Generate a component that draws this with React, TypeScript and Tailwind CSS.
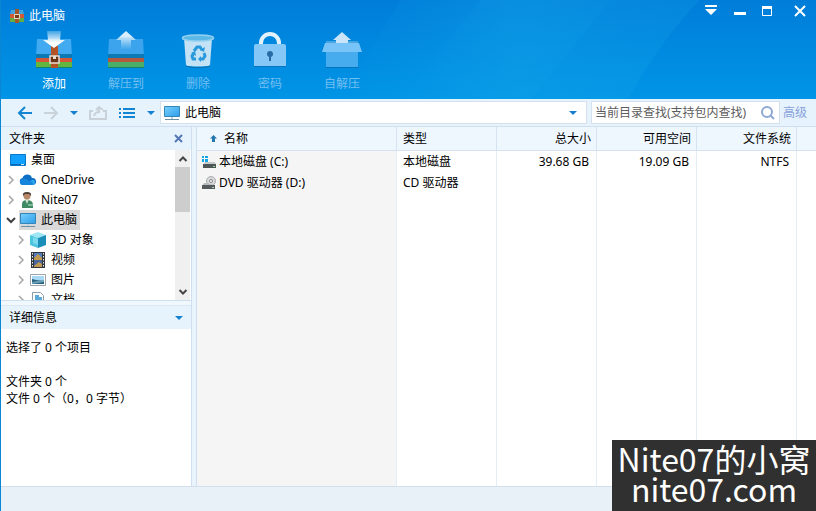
import type { ReactNode } from "react";

const ZipBase = ({ dim = false }: { dim?: boolean }) => (
  <g>
    <path d="M2 9h34l1 18H1z" fill={dim ? "#3ba4ec" : "#41aaf0"} />
    <path d="M1 24h36v5H1z" fill="#0b79b4" />
    <path d="M1 28h36v4H1z" fill={dim ? "#b4583f" : "#d5573a"} />
    <path d="M1 32h36v5H1z" fill={dim ? "#48ae68" : "#62b53f"} />
    <path d="M1 37h36v1H1z" fill="#17836a" />
  </g>
);

const AddIcon = () => (
  <svg width="38" height="40" viewBox="0 0 38 40" aria-hidden="true">
    <defs>
      <linearGradient id="down" x1="0" y1="0" x2="0" y2="1">
        <stop offset="0" stopColor="#fff" stopOpacity="0.25" />
        <stop offset="0.7" stopColor="#fff" />
      </linearGradient>
    </defs>
    <ZipBase />
    <path d="M16 16h7v22h-7z" fill="#b25425" />
    <path d="M12 1h14l-1 9h5L19 18 8 10h5z" fill="url(#down)" />
    <path d="M15 26h9v7h-9z" fill="#6b3414" stroke="#e9ddd3" strokeWidth="1.500" />
    <path d="M18 26h3v3h-3z" fill="#e9ddd3" />
  </svg>
);

const ExtractIcon = () => (
  <svg width="38" height="40" viewBox="0 0 38 40" aria-hidden="true">
    <defs>
      <linearGradient id="up" x1="0" y1="0" x2="0" y2="1">
        <stop offset="0.3" stopColor="#d9edfb" />
        <stop offset="1" stopColor="#9fd2f6" stopOpacity="0.1" />
      </linearGradient>
    </defs>
    <ZipBase dim />
    <path d="M19 1l10 9h-5v9H14v-9H9z" fill="url(#up)" />
  </svg>
);

const DeleteIcon = () => (
  <svg width="38" height="40" viewBox="0 0 38 40" aria-hidden="true">
    <path d="M5 8h28l-2 27c0 2-24 2-24 0z" fill="#c4e2f5" />
    <ellipse cx="19" cy="8" rx="15.500" ry="3" fill="#5ab9e6" stroke="#93d0ef" strokeWidth="1.500" />
    <path d="M7 36c4 2 20 2 24 0" stroke="#0871ad" fill="none" />
    <g fill="none" stroke="#2999dc" strokeWidth="3">
      <path d="M15 21l3-4h3l2 3" />
      <path d="M25 23l1 3-2 3h-3" />
      <path d="M17 29h-3l-1-3 2-3" />
    </g>
    <path d="M21 20l4 2 1-5zM22 26v6l-3-3zM12 23l4-2 1 5z" fill="#2999dc" />
  </svg>
);

const LockIcon = () => (
  <svg width="38" height="40" viewBox="0 0 38 40" aria-hidden="true">
    <path d="M10 16v-3a9 9 0 0 1 18 0v3" fill="none" stroke="#e2f2fc" strokeWidth="4" />
    <path d="M3 16q0-2 2-2h28q2 0 2 2v20H3z" fill="#85c8f7" />
    <path d="M3 36h32v1H3z" fill="#0874bc" />
    <circle cx="19" cy="24" r="3" fill="#276ca5" />
    <path d="M18 25h2v6h-2z" fill="#276ca5" />
  </svg>
);

const SfxIcon = () => (
  <svg width="42" height="40" viewBox="0 0 42 40" aria-hidden="true">
    <path d="M5 11h32v6H5z" fill="#49a5df" />
    <path d="M21 2l9 8h-3v6H15v-6h-3z" fill="#cae5f9" />
    <path d="M5 21h32v16H5z" fill="#47aced" />
    <path d="M4 13h34l3 9H1z" fill="#78c3f7" />
    <path d="M4 37h34v1H4z" fill="#0874bc" />
  </svg>
);

const AppIcon = () => (
  <svg width="16" height="14" viewBox="0 0 16 14" aria-hidden="true">
    <path d="M2 1h12l1 5H1z" fill="#43a5dc" />
    <path d="M1 5h14v4H1z" fill="#d25a36" />
    <path d="M1 9h14v4H1z" fill="#63ab42" />
    <path d="M6 0h4v14H6z" fill="#a1572a" />
    <path d="M5.500 5.500h5v4h-5z" fill="#754019" stroke="#e9d9c4" />
  </svg>
);

const Pc = () => (
  <svg width="18" height="18" viewBox="0 0 18 18" aria-hidden="true">
    <defs>
      <linearGradient id="screen" x1="0" y1="0" x2="1" y2="1">
        <stop offset="0" stopColor="#7bd0fc" />
        <stop offset="1" stopColor="#2c9eea" />
      </linearGradient>
    </defs>
    <path d="M1.500 2.500h15v10h-15z" fill="url(#screen)" stroke="#3585b8" />
    <path d="M8 13h2v2H8z" fill="#b8d5e5" />
    <path d="M2 15.500h14" stroke="#6c8fa5" />
  </svg>
);

const Desktop = () => (
  <svg width="18" height="16" viewBox="0 0 18 16" aria-hidden="true">
    <path d="M1.500 2.500h15v11h-15z" fill="#12a0ff" stroke="#0879c9" />
    <path d="M2 12h14v1H2z" fill="#0868b8" />
    <path d="M12 12h3v1h-3z" fill="#cde9fa" />
  </svg>
);

const Cloud = () => (
  <svg width="18" height="16" viewBox="0 0 18 16" aria-hidden="true">
    <path d="M4 13a3.500 3.500 0 0 1-.5-6.900A5 5 0 0 1 13 6a3.500 3.500 0 0 1 1 7z" fill="#0f6fc6" />
    <path d="M5 13L14 7.500A3 3 0 0 1 14.500 13z" fill="#29a5ea" />
    <path d="M4 7a3.500 3.500 0 0 1 4 .5L14 11a2 2 0 0 1-1 2H4a3 3 0 0 1 0-6z" fill="#1686dc" />
  </svg>
);

const Person = () => (
  <svg width="18" height="18" viewBox="0 0 18 18" aria-hidden="true">
    <path d="M3 17v-4q0-4 5-4t6 4v4z" fill="#3f8a62" />
    <path d="M6 8h4l-2 5z" fill="#d7e2d3" />
    <circle cx="8" cy="5" r="3.500" fill="#b88967" />
    <path d="M4 5q-1-4 4-4t4 4l-2-2H6z" fill="#4d4037" />
    <path d="M9 14h5" stroke="#80b89a" strokeWidth="2" />
  </svg>
);

const Cube = () => (
  <svg width="18" height="18" viewBox="0 0 18 18" aria-hidden="true">
    <path d="M9 1l8 3-8 3-8-3z" fill="#9de6f4" />
    <path d="M1 4l8 3v10l-8-3z" fill="#4cc5df" />
    <path d="M17 4L9 7v10l8-3z" fill="#1a8eb9" />
    <path d="M4 6l5 2v6l-5-2z" fill="#7adaee" />
  </svg>
);

const Film = () => (
  <svg width="18" height="18" viewBox="0 0 18 18" aria-hidden="true">
    <path d="M2 1h14v16H2z" fill="#30343b" />
    <path d="M5 2h8v6H5z" fill="#557cba" />
    <path d="M5 9h8v7H5z" fill="#4b6798" />
    <path d="M5 7l4-4 4 4v2H5zM5 15l5-4 3 2v3H5z" fill="#c09a52" />
    <path d="M3.500 2v14M14.500 2v14" stroke="#eef0f2" strokeDasharray="1.500 1.500" />
  </svg>
);

const Photo = () => (
  <svg width="18" height="16" viewBox="0 0 18 16" aria-hidden="true">
    <path d="M1.500 2.500h15v11h-15z" fill="#fff" stroke="#9aa4ac" />
    <path d="M3 4h12v5H3z" fill="#a7d8f4" />
    <path d="M3 7l4 1 8 1v3H3z" fill="#286080" />
    <path d="M3 10l12-2v2L3 12z" fill="#6ba0b6" />
  </svg>
);

const Doc = () => (
  <svg width="18" height="18" viewBox="0 0 18 18" aria-hidden="true">
    <path d="M3.500 1.500h8l3 3v12h-11z" fill="#fff" stroke="#8f9ba5" />
    <path d="M6 5h4M6 7h7M6 9h7M6 11h4" stroke="#2691cf" strokeWidth="1.500" />
  </svg>
);

const DiskC = () => (
  <svg width="16" height="16" viewBox="0 0 16 16" aria-hidden="true">
    <path d="M1 2h2v2H1zM4 2h3v2H4zM1 5h2v3H1zM4 5h3v3H4z" fill="#12a5e8" />
    <path d="M4 8h10l1 3H2z" fill="#c7cacb" />
    <path d="M2 10h13v4H2z" fill="#4e5557" />
    <path d="M12 12h2v1h-2z" fill="#8de18c" />
  </svg>
);

const DiskD = () => (
  <svg width="16" height="16" viewBox="0 0 16 16" aria-hidden="true">
    <circle cx="10" cy="6" r="4.500" fill="#d8d9da" stroke="#a9adaf" />
    <circle cx="10" cy="6" r="1.500" fill="#fff" stroke="#888" />
    <path d="M3 8h4l7 3H1z" fill="#b8bcbe" />
    <path d="M1 10h13v4H1z" fill="#555a5c" />
    <path d="M11 12h2v1h-2z" fill="#a8d9a5" />
  </svg>
);

const Caret = () => (
  <svg width="10" height="6" viewBox="0 0 10 6" aria-hidden="true">
    <path d="M1 1h8L5 5z" fill="#1480cf" />
  </svg>
);

const Chevron = ({ open }: { open: boolean }) => (
  <svg width="10" height="10" viewBox="0 0 10 10" aria-hidden="true" fill="none">
    {open ? (
      <path d="M1 3l4 4 4-4" stroke="#404040" strokeWidth="2" />
    ) : (
      <path d="M3 1l4 4-4 4" stroke="#a6a6a6" strokeWidth="1.500" />
    )}
  </svg>
);

const ScrollArrow = ({ down = false }: { down?: boolean }) => (
  <svg width="10" height="8" viewBox="0 0 10 8" aria-hidden="true">
    <path d={down ? "M1.500 2L5 5.500 8.500 2" : "M1.500 6L5 2.500 8.500 6"} fill="none" stroke="#454545" strokeWidth="2" />
  </svg>
);

const tools: { label: string; icon: ReactNode; active?: boolean }[] = [
  { label: "添加", icon: <AddIcon />, active: true },
  { label: "解压到", icon: <ExtractIcon /> },
  { label: "删除", icon: <DeleteIcon /> },
  { label: "密码", icon: <LockIcon /> },
  { label: "自解压", icon: <SfxIcon /> },
];

type Node = { label: string; icon: ReactNode; level: number; open?: boolean; selected?: boolean };
const tree: Node[] = [
  { label: "OneDrive", icon: <Cloud />, level: 0, open: false },
  { label: "Nite07", icon: <Person />, level: 0, open: false },
  { label: "此电脑", icon: <Pc />, level: 0, open: true, selected: true },
  { label: "3D 对象", icon: <Cube />, level: 1, open: false },
  { label: "视频", icon: <Film />, level: 1, open: false },
  { label: "图片", icon: <Photo />, level: 1, open: false },
  { label: "文档", icon: <Doc />, level: 1, open: false },
];

const rows = [
  { icon: <DiskC />, name: "本地磁盘 (C:)", type: "本地磁盘", total: "39.68 GB", free: "19.09 GB", fs: "NTFS" },
  { icon: <DiskD />, name: "DVD 驱动器 (D:)", type: "CD 驱动器", total: "", free: "", fs: "" },
];

function Header() {
  return (
    <header className="relative h-[99px] shrink-0 overflow-hidden bg-gradient-to-b from-[#007dd9] to-[#0095e6] text-white">
      <svg className="absolute inset-0 h-full w-full" viewBox="0 0 816 98" preserveAspectRatio="none" aria-hidden="true">
        <defs>
          <linearGradient id="sheen" x1="0" y1="0" x2="1" y2="0">
            <stop offset="0" stopColor="#14a5e8" stopOpacity="0" />
            <stop offset="0.5" stopColor="#14a5e8" stopOpacity="0.35" />
            <stop offset="1" stopColor="#14a5e8" stopOpacity="0.2" />
          </linearGradient>
        </defs>
        <path d="M400 0h300q-40 40-72 98H340z" fill="url(#sheen)" />
        <path d="M480 0h130L555 68 530 98H400z" fill="url(#sheen)" opacity="0.5" />
      </svg>
      <div className="relative flex h-[30px] items-start justify-between px-2">
        <h1 className="flex h-[32px] items-center gap-1">
          <AppIcon />
          此电脑
        </h1>
        <div className="flex h-[22px] items-center gap-[13px]">
          <button aria-label="菜单">
            <svg width="16" height="16" viewBox="0 0 16 16" aria-hidden="true">
              <path d="M2 2h12v2H2zM2 6h12l-6 6z" fill="#fff" />
            </svg>
          </button>
          <button aria-label="最小化">
            <svg width="16" height="16" viewBox="0 0 16 16" aria-hidden="true">
              <path d="M2 9h12v3H2z" fill="#fff" />
            </svg>
          </button>
          <button aria-label="最大化">
            <svg width="14" height="16" viewBox="0 0 14 16" aria-hidden="true">
              <path d="M1.500 3.500h9v9h-9z" fill="none" stroke="#fff" />
              <path d="M1 3h10v3H1z" fill="#fff" />
            </svg>
          </button>
          <button aria-label="关闭" className="ml-1">
            <svg width="16" height="16" viewBox="0 0 16 16" aria-hidden="true">
              <path d="M3 3l10 10M13 3L3 13" stroke="#fff" strokeWidth="2" />
            </svg>
          </button>
        </div>
      </div>
      <nav className="relative flex pl-[17px]">
        {tools.map((t) => (
          <button key={t.label} className="flex w-[72px] flex-col items-center gap-1">
            {t.icon}
            <span className={t.active ? "leading-5 text-white" : "leading-5 text-[#75bff0]"}>{t.label}</span>
          </button>
        ))}
      </nav>
    </header>
  );
}

function AddressBar() {
  return (
    <div className="flex h-[28px] shrink-0 items-center border-b border-[#cfdff0] bg-[#e6f3fc]">
      <div className="flex w-[159px] items-center pl-4">
        <button aria-label="后退">
          <svg width="16" height="16" viewBox="0 0 16 16" fill="none" stroke="#1385d2" strokeWidth="2" aria-hidden="true">
            <path d="M15 8H2M8 2L2 8l6 6" />
          </svg>
        </button>
        <button aria-label="前进" className="ml-[10px]">
          <svg width="16" height="16" viewBox="0 0 16 16" fill="none" stroke="#c9d1d9" strokeWidth="2" aria-hidden="true">
            <path d="M1 8h13M8 2l6 6-6 6" />
          </svg>
        </button>
        <button aria-label="历史" className="ml-[10px]">
          <Caret />
        </button>
        <button aria-label="上一级" className="ml-[9px]">
          <svg width="20" height="16" viewBox="0 0 20 16" fill="none" stroke="#c9d1d9" aria-hidden="true">
            <path d="M5 6H2v8h16V6h-3M6 11q1-4 5-4V3M8 5l3-3 4 3" strokeWidth="2" />
          </svg>
        </button>
        <button aria-label="视图" className="ml-[10px]">
          <svg width="18" height="14" viewBox="0 0 18 14" fill="none" stroke="#1385d2" strokeWidth="2" aria-hidden="true">
            <path d="M1 3h2M5 3h12M1 7h2M5 7h12M1 11h2M5 11h12" />
          </svg>
        </button>
        <button aria-label="视图选项" className="ml-[10px]">
          <Caret />
        </button>
      </div>
      <label className="flex h-[23px] min-w-0 flex-1 items-center gap-1 border border-[#d5e2ee] bg-white pl-[2px] pr-2">
        <Pc />
        <input aria-label="地址" defaultValue="此电脑" className="min-w-0 flex-1 bg-transparent text-black outline-none" />
        <Caret />
      </label>
      <label className="ml-1 flex h-[23px] w-[189px] items-center border border-[#d5e2ee] bg-white px-[3px]">
        <input
          aria-label="查找"
          placeholder="当前目录查找(支持包内查找)"
          className="min-w-0 flex-1 bg-transparent outline-none placeholder:text-[#5c5c5c] placeholder:opacity-100"
        />
        <svg width="16" height="16" viewBox="0 0 16 16" fill="none" stroke="#8fa9d6" strokeWidth="2" aria-hidden="true">
          <circle cx="7" cy="7" r="5" />
          <path d="M10 10l4 4" />
        </svg>
      </label>
      <a href="#advanced" className="w-[36px] pl-[3px] text-[#86a0db]">
        高级
      </a>
    </div>
  );
}

function Sidebar() {
  return (
    <aside className="flex w-[190px] shrink-0 flex-col">
      <div className="flex h-[23px] items-center justify-between bg-[#e6f3fc] pl-2 pr-[7px]">
        <h2>文件夹</h2>
        <button aria-label="关闭文件夹">
          <svg width="11" height="11" viewBox="0 0 11 11" aria-hidden="true">
            <path d="M2 2l7 7M9 2L2 9" stroke="#5577b5" strokeWidth="2" />
          </svg>
        </button>
      </div>
      <div className="flex h-[151px] border-b border-[#cfdff0]">
        <ul className="min-w-0 flex-1 overflow-hidden">
          <li className="flex h-5 items-center gap-1 pl-2">
            <Desktop />
            桌面
          </li>
          {tree.map((n) => (
            <li key={n.label} className={n.level ? "flex h-5 items-center pl-[15px]" : "flex h-5 items-center pl-[5px]"}>
              <Chevron open={!!n.open} />
              <span
                className={
                  n.selected
                    ? "ml-[3px] flex h-5 items-center gap-1 bg-[#d9d9d9] pr-[3px]"
                    : "ml-[3px] flex h-5 items-center gap-1"
                }
              >
                {n.icon}
                {n.label}
              </span>
            </li>
          ))}
        </ul>
        <div className="mr-px flex w-[15px] flex-col items-center bg-[#f0f0f0]">
          <span className="flex h-[17px] items-center">
            <ScrollArrow />
          </span>
          <span className="h-[45px] w-full bg-[#cdcdcd]" />
          <span className="mt-auto flex h-[17px] items-center">
            <ScrollArrow down />
          </span>
        </div>
      </div>
      <div className="h-1 bg-[#f1f8fd]" />
      <div className="flex h-6 items-center justify-between border-t border-[#dbe9f5] bg-[#e6f3fc] pl-2 pr-[7px]">
        <h2>详细信息</h2>
        <button aria-label="折叠">
          <Caret />
        </button>
      </div>
      <div className="flex-1 px-[5px] pt-[10px] leading-[17px]">
        <p>选择了 0 个项目</p>
        <p className="mt-[17px]">文件夹 0 个</p>
        <p>文件 0 个（0，0 字节）</p>
      </div>
    </aside>
  );
}

function FileTable() {
  const th = "border-b border-r border-[#d5e3f0] p-0 font-normal";
  const td = "border-r border-[#e6eef5] p-0";
  return (
    <table className="h-full w-full table-fixed border-separate border-spacing-0">
      <colgroup>
        <col className="w-[200px]" />
        <col className="w-[100px]" />
        <col className="w-[100px]" />
        <col className="w-[100px]" />
        <col className="w-[100px]" />
        <col />
      </colgroup>
      <thead className="bg-[#eff7fe]">
        <tr className="h-6">
          <th className={th + " text-left"}>
            <span className="flex items-center gap-[6px] pl-3">
              <svg width="9" height="9" viewBox="0 0 9 9" aria-hidden="true">
                <path d="M4.500 1L8 4.500H6V8H3V4.500H1z" fill="#2577b0" />
              </svg>
              名称
            </span>
          </th>
          <th className={th + " pl-[6px] text-left"}>类型</th>
          <th className={th + " pr-[5px] text-right"}>总大小</th>
          <th className={th + " pr-[5px] text-right"}>可用空间</th>
          <th className={th + " pr-[5px] text-right"}>文件系统</th>
          <th className="border-b border-[#d5e3f0] p-0" />
        </tr>
      </thead>
      <tbody>
        {rows.map((r) => (
          <tr key={r.name} className="h-[21px]">
            <td className={td + " bg-[#f5f5f5]"}>
              <span className="flex items-center gap-[2px] pl-1">
                {r.icon}
                {r.name}
              </span>
            </td>
            <td className={td + " pl-[6px]"}>{r.type}</td>
            <td className={td + " pr-[7px] text-right"}>{r.total}</td>
            <td className={td + " pr-[7px] text-right"}>{r.free}</td>
            <td className={td + " pr-[7px] text-right"}>{r.fs}</td>
            <td className="p-0" />
          </tr>
        ))}
        <tr>
          <td className={td + " bg-[#f5f5f5]"} />
          <td className={td} />
          <td className={td} />
          <td className={td} />
          <td className={td} />
          <td className="p-0" />
        </tr>
      </tbody>
    </table>
  );
}

export default function App() {
  return (
    <div className="relative flex h-screen flex-col overflow-hidden border-l border-[#0a86d2] bg-white font-['Noto_Sans','Noto_Sans_CJK_SC',sans-serif] text-[12px] leading-4 text-black">
      <Header />
      <AddressBar />
      <main className="flex min-h-0 flex-1">
        <Sidebar />
        <div className="w-[6px] shrink-0 border-x border-[#cfdff0] bg-[#e9f4fc]" />
        <section className="min-w-0 flex-1">
          <FileTable />
        </section>
      </main>
      <footer className="h-[25px] shrink-0 border-t border-[#d3e0ec] bg-[#e8f0f8]" />
      <p className="absolute bottom-0 right-0 h-[71px] w-[204px] whitespace-nowrap bg-[#303030] pt-[3px] text-center font-['Noto_Sans_CJK_SC',sans-serif] text-[32px] leading-[30px] text-white">
        Nite07的小窝
        <br />
        nite07.com
      </p>
    </div>
  );
}
